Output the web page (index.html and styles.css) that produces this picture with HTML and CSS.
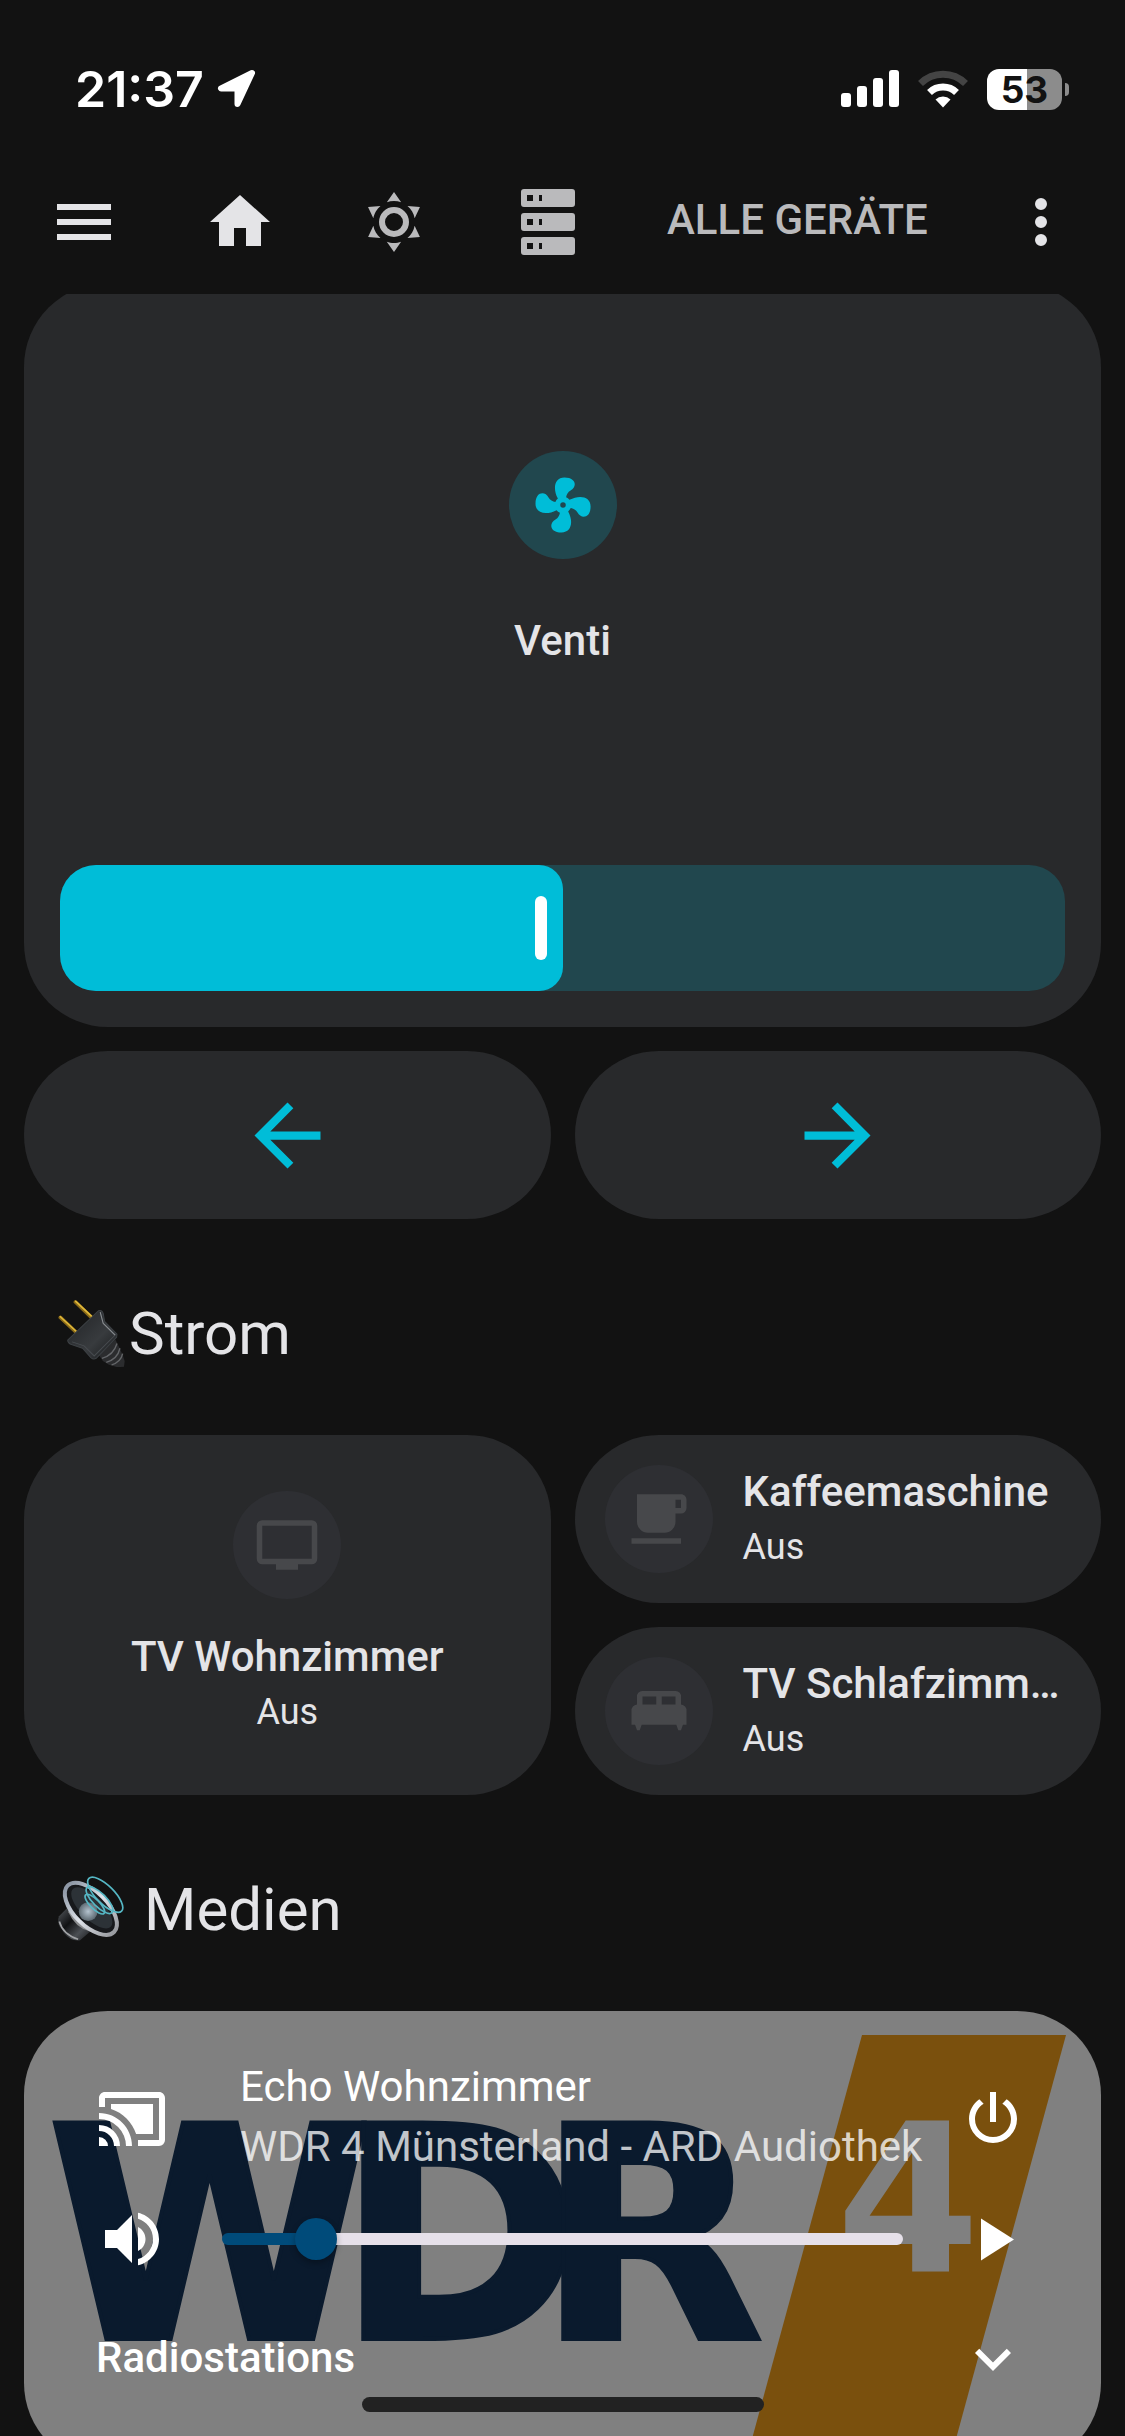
FILE: index.html
```html
<!DOCTYPE html>
<html lang="de">
<head>
    <meta charset="UTF-8">
    <meta name="viewport" content="width=device-width, initial-scale=1">
    <title>Zuhause</title>
    <link rel="stylesheet" href="styles.css">
</head>
<body>

<header class="header">
    <div class="status-bar">
        <span class="time">21:37</span>
        <svg class="location" viewBox="0 0 40 40"><path d="M35 4L4 19.500H20.500V35Z" fill="#fff" stroke="#fff" stroke-width="6" stroke-linejoin="round"/></svg>
        <div class="status-icons">
            <svg class="signal" viewBox="0 0 58 38" fill="#fff">
                <rect x="0" y="23" width="10" height="14" rx="3"/>
                <rect x="16" y="16" width="10" height="21" rx="3"/>
                <rect x="32" y="8" width="10" height="29" rx="3"/>
                <rect x="48" y="0" width="10" height="37" rx="3"/>
            </svg>
            <svg class="wifi" viewBox="0 0 50 38" fill="none">
                <path d="M2.500 13.500A32 32 0 0 1 47.500 13.500" stroke="#444" stroke-width="7"/>
                <path d="M11.500 22.500A19.500 19.500 0 0 1 38.500 22.500" stroke="#fff" stroke-width="7"/>
                <path d="M17.500 29.500A11 11 0 0 1 32.500 29.500L25 37.500Z" fill="#fff"/>
            </svg>
            <div class="battery"><span class="battery-level">53</span><span class="battery-tip"></span></div>
        </div>
    </div>
    <div class="toolbar">
        <button class="icon-button" type="button" aria-label="Menü">
            <svg class="icon" viewBox="0 0 24 24"><path d="M3,6H21V8H3V6M3,11H21V13H3V11M3,16H21V18H3V16Z"/></svg>
        </button>
        <nav class="tabs">
            <a class="tab active" href="#home" aria-label="Home">
                <svg class="icon" viewBox="0 0 24 24"><path d="M10,20V14H14V20H19V12H22L12,3L2,12H5V20H10Z"/></svg>
            </a>
            <a class="tab" href="#wetter" aria-label="Wetter">
                <svg class="icon" viewBox="0 0 24 24"><path d="M12,7A5,5 0 0,1 17,12A5,5 0 0,1 12,17A5,5 0 0,1 7,12A5,5 0 0,1 12,7M12,9A3,3 0 0,0 9,12A3,3 0 0,0 12,15A3,3 0 0,0 15,12A3,3 0 0,0 12,9M12,2L14.39,5.42C13.65,5.15 12.84,5 12,5C11.16,5 10.35,5.15 9.61,5.42L12,2M3.34,7L7.5,6.65C6.9,7.16 6.36,7.78 5.94,8.5C5.5,9.24 5.25,10 5.11,10.79L3.34,7M3.36,17L5.12,13.23C5.26,14 5.53,14.78 5.95,15.5C6.37,16.24 6.91,16.86 7.5,17.37L3.36,17M20.65,7L18.88,10.79C18.74,10 18.47,9.23 18.05,8.5C17.63,7.78 17.1,7.15 16.5,6.64L20.65,7M20.64,17L16.5,17.36C17.09,16.85 17.62,16.22 18.04,15.5C18.46,14.77 18.73,14 18.87,13.21L20.64,17M12,22L9.59,18.56C10.33,18.83 11.14,19 12,19C12.82,19 13.63,18.83 14.37,18.56L12,22Z"/></svg>
            </a>
            <a class="tab" href="#server" aria-label="Server">
                <svg class="icon" viewBox="0 0 24 24"><path d="M4,1H20A1,1 0 0,1 21,2V6A1,1 0 0,1 20,7H4A1,1 0 0,1 3,6V2A1,1 0 0,1 4,1M4,9H20A1,1 0 0,1 21,10V14A1,1 0 0,1 20,15H4A1,1 0 0,1 3,14V10A1,1 0 0,1 4,9M4,17H20A1,1 0 0,1 21,18V22A1,1 0 0,1 20,23H4A1,1 0 0,1 3,22V18A1,1 0 0,1 4,17M9,5H10V3H9V5M9,13H10V11H9V13M9,21H10V19H9V21M5,3V5H7V3H5M5,11V13H7V11H5M5,19V21H7V19H5Z"/></svg>
            </a>
            <a class="tab text-tab" href="#geraete">ALLE GERÄTE</a>
        </nav>
        <button class="icon-button more" type="button" aria-label="Mehr">
            <svg class="icon" viewBox="0 0 24 24"><path d="M12,16A2,2 0 0,1 14,18A2,2 0 0,1 12,20A2,2 0 0,1 10,18A2,2 0 0,1 12,16M12,10A2,2 0 0,1 14,12A2,2 0 0,1 12,14A2,2 0 0,1 10,12A2,2 0 0,1 12,10M12,4A2,2 0 0,1 14,6A2,2 0 0,1 12,8A2,2 0 0,1 10,6A2,2 0 0,1 12,4Z"/></svg>
        </button>
    </div>
</header>

<main class="view">
    <section class="grid">
        <div class="card fan-card">
            <button class="tile-main vertical" type="button">
                <span class="tile-icon on">
                    <svg viewBox="0 0 24 24"><path d="M12,11A1,1 0 0,0 11,12A1,1 0 0,0 12,13A1,1 0 0,0 13,12A1,1 0 0,0 12,11M12.5,2C17,2 17.11,5.57 14.75,6.75C13.76,7.24 13.32,8.29 13.13,9.22C13.61,9.42 14.03,9.73 14.35,10.13C18.05,8.13 22.03,8.92 22.03,12.5C22.03,17 18.46,17.1 17.28,14.73C16.78,13.74 15.72,13.3 14.79,13.11C14.59,13.59 14.28,14 13.88,14.34C15.87,18.03 15.08,22 11.5,22C7,22 6.91,18.42 9.27,17.24C10.25,16.75 10.69,15.71 10.89,14.79C10.4,14.59 9.97,14.27 9.65,13.87C5.96,15.85 2,15.07 2,11.5C2,7 5.56,6.89 6.74,9.26C7.24,10.25 8.29,10.68 9.22,10.87C9.41,10.39 9.73,9.97 10.14,9.65C8.15,5.96 8.94,2 12.5,2Z"/></svg>
                </span>
                <span class="tile-text"><span class="name">Venti</span></span>
            </button>
            <div class="fan-slider">
                <div class="fan-fill" style="width: 50%"></div>
                <input type="range" min="0" max="100" value="50" aria-label="Venti Geschwindigkeit">
            </div>
        </div>
        <button class="card arrow" type="button" aria-label="Zurück">
            <svg viewBox="0 0 24 24"><path d="M20,11V13H7.83L13.42,18.59L12,20L4,12L12,4L13.41,5.41L7.83,11H20Z"/></svg>
        </button>
        <button class="card arrow" type="button" aria-label="Weiter">
            <svg viewBox="0 0 24 24"><path d="M4,11V13H16.17L10.58,18.59L12,20L20,12L12,4L10.59,5.41L16.17,11H4Z"/></svg>
        </button>
    </section>

    <h2 class="heading">
        <svg class="emoji" viewBox="174 120 200 200">
            <defs>
                <linearGradient id="plug" x1="0" y1="0" x2="1" y2="1">
                    <stop offset="0" stop-color="#202225"/>
                    <stop offset=".6" stop-color="#383b3e"/>
                    <stop offset="1" stop-color="#17191b"/>
                </linearGradient>
            </defs>
            <path d="M181 172L232 220M226 126L276 174" stroke="#8a6a18" stroke-width="11" stroke-linecap="round"/>
            <path d="M181 170L232 217M227 124L277 171" stroke="#e0b83a" stroke-width="5" stroke-linecap="round"/>
            <path d="M296 284L345 238L357 262L367 284L373 302L371 319L352 321L326 313L308 302Z" fill="#2b2c2e"/>
            <path d="M305 294Q340 285 350 250M318 306Q352 296 359 264M334 314Q362 304 367 280" stroke="#646669" stroke-width="4" fill="none"/>
            <path d="M203 240L295 152Q304 148 309 160L313 184L350 222L349 231L288 294Q280 299 272 292L247 264L212 252Q203 248 203 240Z" fill="url(#plug)" stroke="#3c4044" stroke-width="3"/>
            <path d="M216 245L252 257L282 287L343 226L308 188L300 156" stroke="#474b4f" stroke-width="3" fill="none"/>
            <path d="M300 156L309 190L345 225" stroke="#8a8e91" stroke-width="3" fill="none"/>
        </svg><span>Strom</span>
    </h2>
    <section class="grid">
        <button class="card tile tall vertical" type="button">
            <span class="tile-icon">
                <svg viewBox="0 0 24 24"><path d="M21,17H3V5H21M21,3H3A2,2 0 0,0 1,5V17A2,2 0 0,0 3,19H8V21H16V19H21A2,2 0 0,0 23,17V5A2,2 0 0,0 21,3Z"/></svg>
            </span>
            <span class="tile-text"><span class="name">TV Wohnzimmer</span><span class="state">Aus</span></span>
        </button>
        <button class="card tile" type="button">
            <span class="tile-icon">
                <svg viewBox="0 0 24 24"><path d="M2,21H20V19H2M20,8H18V5H20M20,3H4V13A4,4 0 0,0 8,17H14A4,4 0 0,0 18,13V10H20A2,2 0 0,0 22,8V5C22,3.89 21.1,3 20,3Z"/></svg>
            </span>
            <span class="tile-text"><span class="name">Kaffeemaschine</span><span class="state">Aus</span></span>
        </button>
        <button class="card tile" type="button">
            <span class="tile-icon">
                <svg viewBox="0 0 24 24"><path d="M20 9.600V7A2 2 0 0 0 18 4.700H6A2 2 0 0 0 4 7V9.600A2.200 2.200 0 0 0 2 12V17H3.300L4 19H5L5.700 17H18.300L19 19H20L20.700 17H22V12A2.200 2.200 0 0 0 20 9.600M11 9.600H6V6.700H11M18 9.600H13V6.700H18Z"/></svg>
            </span>
            <span class="tile-text"><span class="name">TV Schlafzimmer</span><span class="state">Aus</span></span>
        </button>
    </section>

    <h2 class="heading">
        <svg class="emoji" viewBox="174 112 200 200">
            <defs>
                <linearGradient id="magnet" x1="0" y1="0" x2="1" y2="1">
                    <stop offset="0" stop-color="#55595e"/>
                    <stop offset=".4" stop-color="#111214"/>
                    <stop offset=".7" stop-color="#4b4f54"/>
                    <stop offset="1" stop-color="#17181a"/>
                </linearGradient>
                <linearGradient id="rim" x1="0" y1="0" x2="1" y2="0">
                    <stop offset="0" stop-color="#8d97a5"/>
                    <stop offset=".5" stop-color="#dfe3ea"/>
                    <stop offset="1" stop-color="#9a9ca1"/>
                </linearGradient>
                <radialGradient id="dome">
                    <stop offset="0" stop-color="#b4c3cf"/>
                    <stop offset="1" stop-color="#5d6971"/>
                </radialGradient>
            </defs>
            <path d="M202 207L177 232Q168 255 190 282Q215 308 240 304L272 276Z" fill="url(#magnet)"/>
            <path d="M178 248Q188 286 234 301" stroke="#a0a2a5" stroke-width="5" fill="none"/>
            <path d="M203 185L205 220Q225 265 268 277L300 280Z" fill="#8b8d8f"/>
            <g transform="rotate(45 272 210)">
                <ellipse cx="272" cy="210" rx="98" ry="50" fill="#17191c" stroke="url(#rim)" stroke-width="12"/>
                <ellipse cx="272" cy="206" rx="80" ry="34" fill="#2c3237"/>
            </g>
            <circle cx="264" cy="218" r="28" fill="url(#dome)"/>
            <g fill="none" stroke="#55b7c4" stroke-width="5">
                <ellipse cx="284" cy="196" rx="39" ry="14" transform="rotate(45 284 196)"/>
                <ellipse cx="298" cy="184" rx="53" ry="20" transform="rotate(45 298 184)"/>
                <ellipse cx="315" cy="168" rx="69" ry="27" transform="rotate(45 315 168)"/>
            </g>
        </svg><span class="spaced">Medien</span>
    </h2>
    <section class="grid">
        <div class="card media-card">
            <svg class="cover" viewBox="0 0 1077 456" preserveAspectRatio="xMidYMin slice">
                <path d="M838 24H1042L920 472H716Z" fill="#7a500d"/>
                <g class="cover-text" font-size="297" fill="#0a1a2d" stroke="#0a1a2d" stroke-width="4">
                    <text x="22" y="328">W</text>
                    <text x="312" y="328">D</text>
                    <text x="512" y="328">R</text>
                </g>
                <text class="cover-text" x="812" y="261" font-size="207" fill="#808080">4</text>
            </svg>
            <div class="media-row">
                <svg class="icon" viewBox="0 0 24 24"><path d="M21,3H3C1.89,3 1,3.89 1,5V8H3V5H21V19H14V21H21A2,2 0 0,0 23,19V5C23,3.89 22.1,3 21,3M1,10V12A9,9 0 0,1 10,21H12C12,14.92 7.07,10 1,10M19,7H5V8.63C8.96,9.91 12.09,13.04 13.37,17H19M1,14V16A5,5 0 0,1 6,21H8A7,7 0 0,0 1,14M1,18V21H4A3,3 0 0,0 1,18Z"/></svg>
                <div class="media-text">
                    <div class="media-name">Echo Wohnzimmer</div>
                    <div class="media-title">WDR 4 Münsterland - ARD Audiothek</div>
                </div>
                <button class="icon-button" type="button" aria-label="Ausschalten">
                    <svg class="icon" viewBox="0 0 24 24"><path d="M16.56,5.44L15.11,6.89C16.84,7.94 18,9.83 18,12A6,6 0 0,1 12,18A6,6 0 0,1 6,12C6,9.83 7.16,7.94 8.88,6.88L7.44,5.44C5.36,6.88 4,9.28 4,12A8,8 0 0,0 12,20A8,8 0 0,0 20,12C20,9.28 18.64,6.88 16.56,5.44M13,3H11V13H13"/></svg>
                </button>
            </div>
            <div class="media-row volume-row">
                <button class="icon-button" type="button" aria-label="Stumm">
                    <svg class="icon" viewBox="0 0 24 24"><path d="M14,3.23V5.29C16.89,6.15 19,8.83 19,12C19,15.17 16.89,17.84 14,18.7V20.77C18,19.86 21,16.28 21,12C21,7.72 18,4.14 14,3.23M16.5,12C16.5,10.23 15.5,8.71 14,7.97V16C15.5,15.29 16.5,13.76 16.5,12M3,9V15H7L12,20V4L7,9H3Z"/></svg>
                </button>
                <input class="volume" type="range" min="0" max="100" step="0.5" value="11.5" aria-label="Lautstärke">
                <button class="icon-button" type="button" aria-label="Wiedergabe">
                    <svg class="icon" viewBox="0 0 24 24"><path d="M8,5.14V19.14L19,12.14L8,5.14Z"/></svg>
                </button>
            </div>
            <button class="media-row stations" type="button">
                <span class="stations-label">Radiostations</span>
                <svg class="icon" viewBox="0 0 24 24"><path d="M7.41,8.58L12,13.17L16.59,8.58L18,10L12,16L6,10L7.41,8.58Z"/></svg>
            </button>
        </div>
    </section>
</main>

<div class="home-indicator"></div>

</body>
</html>
```
FILE: styles.css
```css
* {
    box-sizing: border-box;
}
body {
    margin: 0;
    height: 100vh;
    display: flex;
    flex-direction: column;
    overflow: hidden;
    background-color: #121212;
    color: #e4e4e7;
    font-family: Roboto, "Noto Sans", sans-serif;
    font-size: 42px;
}
button {
    margin: 0;
    padding: 0;
    border: none;
    background: none;
    color: inherit;
    font: inherit;
    cursor: pointer;
}
svg {
    display: block;
    flex: none;
}
.icon {
    width: 72px;
    height: 72px;
    fill: currentColor;
}

/* header */
.header {
    flex: none;
    position: relative;
    background-color: #121212;
}
.status-bar {
    display: flex;
    align-items: center;
    height: 150px;
    padding: 28px 56px 0 75px;
    color: #fff;
    font-family: Inter, sans-serif;
}
.time {
    font-size: 50px;
    font-weight: 600;
}
.location {
    width: 40px;
    height: 40px;
    margin-left: 13px;
}
.status-icons {
    display: flex;
    align-items: center;
    gap: 19px;
    margin-left: auto;
}
.signal {
    width: 58px;
    height: 38px;
}
.wifi {
    width: 50px;
    height: 38px;
}
.battery {
    display: flex;
    align-items: center;
    gap: 3px;
}
.battery-level {
    width: 75px;
    height: 41px;
    border-radius: 12px;
    background: linear-gradient(to right, #fff 53%, #8c8c8c 53%);
    color: #121212;
    font-size: 37px;
    font-weight: 700;
    line-height: 41px;
    text-align: center;
}
.battery-tip {
    width: 4px;
    height: 13px;
    border-radius: 0 4px 4px 0;
    background-color: #8c8c8c;
}
.toolbar {
    display: flex;
    align-items: center;
    height: 144px;
    padding: 0 48px;
}
.icon-button {
    flex: none;
}
.tabs {
    display: flex;
    align-items: center;
    margin-left: 43px;
}
.tab {
    padding: 0 41px;
    color: #bababc;
    font-weight: 500;
    line-height: 60px;
    text-decoration: none;
    white-space: nowrap;
}
.tab.active {
    color: #e4e4e7;
}
.text-tab {
    padding: 0 42px 4px;
}
.more {
    margin-left: auto;
}

/* dashboard */
.view {
    flex: 1;
    min-height: 0;
    overflow: hidden;
    padding: 0 24px;
}
.grid {
    display: grid;
    grid-template-columns: 1fr 1fr;
    grid-auto-rows: 168px;
    gap: 24px;
}
.grid:first-child {
    margin-top: -11px;
}
.card {
    min-width: 0;
    border-radius: 84px;
    background-color: #28292b;
    overflow: hidden;
}
.heading {
    display: flex;
    align-items: center;
    height: 216px;
    margin: 0;
    padding: 12px 34px 0;
    font-size: 60px;
    font-weight: 400;
}
.emoji {
    width: 67px;
    height: 67px;
    margin-right: 4px;
}
.spaced {
    margin-left: 15px;
}

/* tiles */
.tile {
    display: flex;
    align-items: center;
    gap: 30px;
    padding: 30px 36px 30px 30px;
    text-align: left;
}
.tall {
    grid-row: span 2;
    padding: 30px;
}
.vertical {
    display: flex;
    flex-direction: column;
    align-items: center;
    justify-content: center;
    gap: 30px;
    text-align: center;
}
.tile-icon {
    display: flex;
    flex: none;
    align-items: center;
    justify-content: center;
    width: 108px;
    height: 108px;
    border-radius: 50%;
    background-color: #2e2f33;
    color: #47484b;
}
.tile-icon.on {
    background-color: #21474e;
    color: #00bdd8;
}
.tile-icon svg {
    width: 66px;
    height: 66px;
    fill: currentColor;
}
.tile-text {
    display: flex;
    flex-direction: column;
    justify-content: center;
    min-width: 0;
    min-height: 108px;
}
.name {
    overflow: hidden;
    font-weight: 500;
    line-height: 56px;
    text-overflow: ellipsis;
    white-space: nowrap;
}
.state {
    font-size: 36px;
    line-height: 54px;
}
.fan-card {
    grid-column: span 2;
    grid-row: span 4;
    display: flex;
    flex-direction: column;
}
.fan-card .name {
    padding-bottom: 4px;
}
.tile-main {
    flex: 1;
}
.fan-slider {
    position: relative;
    height: 126px;
    margin: 0 36px 36px;
    border-radius: 36px;
    background-color: #21474e;
    overflow: hidden;
}
.fan-fill {
    display: flex;
    align-items: center;
    justify-content: flex-end;
    height: 100%;
    padding-right: 16px;
    border-radius: 0 24px 24px 0;
    background-color: #00bdd8;
}
.fan-fill::after {
    content: "";
    width: 12px;
    height: 64px;
    border-radius: 6px;
    background-color: #fff;
}
.fan-slider input {
    position: absolute;
    inset: 0;
    width: 100%;
    height: 100%;
    margin: 0;
    opacity: 0;
}
.arrow {
    display: flex;
    align-items: center;
    justify-content: center;
    color: #00bdd8;
}
.arrow svg {
    width: 99px;
    height: 99px;
    fill: currentColor;
}

/* media player */
.media-card {
    grid-column: span 2;
    grid-row: span 3;
    position: relative;
    align-self: start;
    padding: 48px 72px;
    background-color: #808080;
    color: #fff;
}
.cover {
    position: absolute;
    inset: 0;
    width: 100%;
    height: 100%;
}
.cover-text {
    font-family: "DejaVu Sans", sans-serif;
    font-weight: 700;
}
.media-row {
    position: relative;
    display: flex;
    align-items: center;
    width: 100%;
    height: 120px;
}
.media-text {
    flex: 1;
    min-width: 0;
    margin-left: 72px;
    padding-bottom: 4px;
    line-height: 60px;
    white-space: nowrap;
}
.media-title {
    color: rgba(255, 255, 255, 0.75);
}
.volume-row {
    gap: 54px;
}
.volume {
    appearance: none;
    flex: 1;
    min-width: 0;
    height: 12px;
    margin: 0;
    border-radius: 6px;
    background: linear-gradient(to right, #004b7a 14%, #e6e0e9 14%);
}
.volume::-webkit-slider-thumb {
    appearance: none;
    width: 42px;
    height: 42px;
    border-radius: 50%;
    background-color: #004b7a;
    box-shadow: 0 3px 6px rgba(0, 0, 0, 0.3);
}
.stations {
    justify-content: space-between;
    font-weight: 500;
}
.stations-label {
    padding-bottom: 4px;
}
.home-indicator {
    position: fixed;
    bottom: 24px;
    left: 50%;
    width: 402px;
    height: 15px;
    border-radius: 8px;
    background-color: #222;
    transform: translateX(-50%);
}
```
